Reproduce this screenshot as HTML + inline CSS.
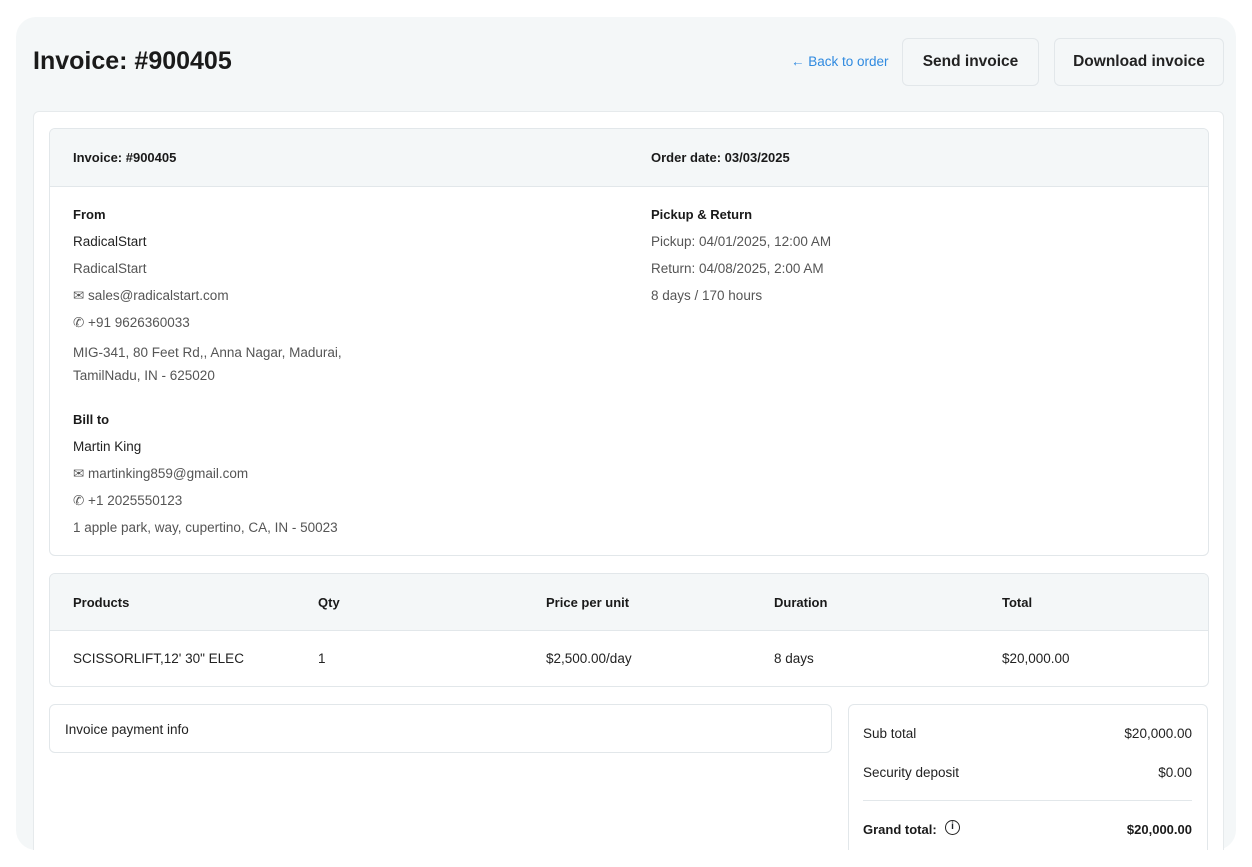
<!DOCTYPE html>
<html><head><style>
*{box-sizing:border-box;margin:0;padding:0}
html,body{width:1252px;height:867px;overflow:hidden}
body{background:#fff;font-family:"Liberation Sans",sans-serif;color:#1f2328;position:relative;font-size:13.5px}
.clip{position:absolute;left:0;top:0;width:1252px;height:850px;overflow:hidden}
.abs{position:absolute}
.panel{left:16px;top:17px;width:1220px;height:833px;background:#f4f7f8;border-radius:20px}
.card{left:33px;top:111px;width:1191px;height:760px;background:#fff;border:1px solid #e6eaec;border-radius:6px}
.box{border:1px solid #e2e7ea;border-radius:6px;background:#fff;overflow:hidden}
.gh{background:#f4f7f8;border-bottom:1px solid #e2e7ea}
.b{font-weight:bold;font-size:13px;color:#1a1a1a}
.t{font-size:13.5px;color:#222}
.g{font-size:13.5px;color:#555}
.btn{background:#f4f7f8;border:1px solid #e2e7ea;border-radius:6px;font-size:15.5px;font-weight:bold;color:#222;display:flex;align-items:center;justify-content:center}
</style></head><body>
<div class="clip">
<div class="abs panel"></div>
<div class="abs" style="left:33px;top:47px;font-size:25px;font-weight:bold;color:#1a1a1a">Invoice: #900405</div>
<div class="abs" style="left:791px;top:54px;font-size:13.5px;color:#2f8ae0">← Back to order</div>
<div class="abs btn" style="left:902px;top:38px;width:137px;height:48px">Send invoice</div>
<div class="abs btn" style="left:1054px;top:38px;width:170px;height:48px">Download invoice</div>
<div class="abs card"></div>
<div class="abs box" style="left:49px;top:128px;width:1160px;height:428px">
<div class="gh" style="height:58px"></div></div>
<div class="abs b" style="left:73px;top:150px">Invoice: #900405</div>
<div class="abs b" style="left:651px;top:150px">Order date: 03/03/2025</div>
<div class="abs b" style="left:73px;top:207px">From</div>
<div class="abs t" style="left:73px;top:234px">RadicalStart</div>
<div class="abs g" style="left:73px;top:261px">RadicalStart</div>
<div class="abs g" style="left:73px;top:288px">✉ sales@radicalstart.com</div>
<div class="abs g" style="left:73px;top:315px">✆ +91 9626360033</div>
<div class="abs g" style="left:73px;top:341px;line-height:23px">MIG-341, 80 Feet Rd,, Anna Nagar, Madurai,<br>TamilNadu, IN - 625020</div>
<div class="abs b" style="left:73px;top:412px">Bill to</div>
<div class="abs t" style="left:73px;top:439px">Martin King</div>
<div class="abs g" style="left:73px;top:466px">✉ martinking859@gmail.com</div>
<div class="abs g" style="left:73px;top:493px">✆ +1 2025550123</div>
<div class="abs g" style="left:73px;top:520px">1 apple park, way, cupertino, CA, IN - 50023</div>
<div class="abs b" style="left:651px;top:207px">Pickup &amp; Return</div>
<div class="abs g" style="left:651px;top:234px">Pickup: 04/01/2025, 12:00 AM</div>
<div class="abs g" style="left:651px;top:261px">Return: 04/08/2025, 2:00 AM</div>
<div class="abs g" style="left:651px;top:288px">8 days / 170 hours</div>
<div class="abs box" style="left:49px;top:573px;width:1160px;height:114px"><div class="gh" style="height:57px"></div></div>
<div class="abs b" style="left:73px;top:595px">Products</div>
<div class="abs b" style="left:318px;top:595px">Qty</div>
<div class="abs b" style="left:546px;top:595px">Price per unit</div>
<div class="abs b" style="left:774px;top:595px">Duration</div>
<div class="abs b" style="left:1002px;top:595px">Total</div>
<div class="abs t" style="left:73px;top:651px">SCISSORLIFT,12' 30" ELEC</div>
<div class="abs t" style="left:318px;top:651px">1</div>
<div class="abs t" style="left:546px;top:651px">$2,500.00/day</div>
<div class="abs t" style="left:774px;top:651px">8 days</div>
<div class="abs t" style="left:1002px;top:651px">$20,000.00</div>
<div class="abs box" style="left:49px;top:704px;width:783px;height:49px"></div>
<div class="abs t" style="left:65px;top:722px">Invoice payment info</div>
<div class="abs box" style="left:848px;top:704px;width:360px;height:180px"></div>
<div class="abs t" style="left:863px;top:726px">Sub total</div>
<div class="abs t" style="right:60px;top:726px">$20,000.00</div>
<div class="abs t" style="left:863px;top:765px">Security deposit</div>
<div class="abs t" style="right:60px;top:765px">$0.00</div>
<div class="abs" style="left:863px;top:800px;width:329px;height:1px;background:#e2e7ea"></div>
<div class="abs b" style="left:863px;top:822px">Grand total:</div>
<div class="abs" style="left:945px;top:820px;width:15px;height:15px;border:1.5px solid #222;border-radius:50%;font-size:10px;font-weight:bold;text-align:center;line-height:12px">i</div>
<div class="abs b" style="right:60px;top:822px">$20,000.00</div>
</div>
</body></html>
